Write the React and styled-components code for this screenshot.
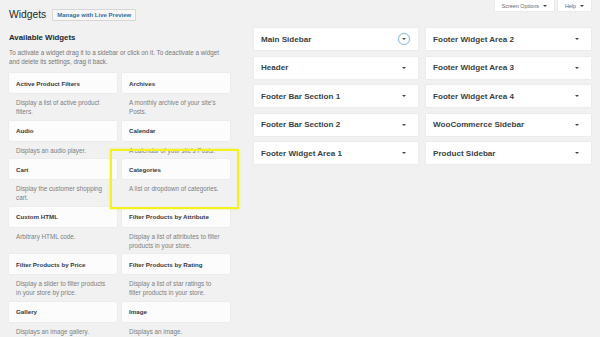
import React from 'react'
import styled, { createGlobalStyle } from 'styled-components';

const GlobalStyle = createGlobalStyle`
    html, body {
        margin: 0;
        padding: 0;
        background: #f1f1f1;
        font-family: "Liberation Sans", Arial, sans-serif;
        color: #23282d;
    }
`;

const widgets = [
    { title: 'Active Product Filters', desc: 'Display a list of active product filters.' },
    { title: 'Archives', desc: "A monthly archive of your site's Posts." },
    { title: 'Audio', desc: 'Displays an audio player.' },
    { title: 'Calendar', desc: "A calendar of your site's Posts." },
    { title: 'Cart', desc: 'Display the customer shopping cart.' },
    { title: 'Categories', desc: 'A list or dropdown of categories.' },
    { title: 'Custom HTML', desc: 'Arbitrary HTML code.' },
    { title: 'Filter Products by Attribute', desc: 'Display a list of attributes to filter products in your store.' },
    { title: 'Filter Products by Price', desc: 'Display a slider to filter products in your store by price.' },
    { title: 'Filter Products by Rating', desc: 'Display a list of star ratings to filter products in your store.' },
    { title: 'Gallery', desc: 'Displays an image gallery.' },
    { title: 'Image', desc: 'Displays an image.' },
];

const sidebars = [
    'Main Sidebar', 'Footer Widget Area 2',
    'Header', 'Footer Widget Area 3',
    'Footer Bar Section 1', 'Footer Widget Area 4',
    'Footer Bar Section 2', 'WooCommerce Sidebar',
    'Footer Widget Area 1', 'Product Sidebar',
];

class App extends React.Component {
    render() {
        return (
            <Page>
                <GlobalStyle />
                <Header>
                    <TitleGroup>
                        <Title>Widgets</Title>
                        <PreviewButton>Manage with Live Preview</PreviewButton>
                    </TitleGroup>
                    <Tabs>
                        <Tab>Screen Options <Caret /></Tab>
                        <Tab>Help <Caret /></Tab>
                    </Tabs>
                </Header>

                <Main>
                    <Available>
                        <SubTitle>Available Widgets</SubTitle>
                        <Intro>
                            To activate a widget drag it to a sidebar or click on it. To deactivate a widget
                            and delete its settings, drag it back.
                        </Intro>
                        <WidgetGrid>
                            {widgets.map((w) => (
                                <Widget key={w.title}>
                                    <WidgetTitle>{w.title}</WidgetTitle>
                                    <WidgetDesc>{w.desc}</WidgetDesc>
                                </Widget>
                            ))}
                            <Highlight />
                        </WidgetGrid>
                    </Available>

                    <SidebarGrid>
                        {sidebars.map((name, i) => (
                            <Sidebar key={name}>
                                <span>{name}</span>
                                <Toggle focused={i === 0}><Caret /></Toggle>
                            </Sidebar>
                        ))}
                    </SidebarGrid>
                </Main>
            </Page>
        );
    }
}

const Page = styled.div`
    width: 600px;
    height: 337px;
    overflow: hidden;
    padding: 0 9px;
    box-sizing: border-box;
`;

const Header = styled.div`
    display: flex;
    justify-content: space-between;
    align-items: flex-start;
    height: 28px;
`;

const TitleGroup = styled.div`
    display: flex;
    align-items: center;
    gap: 6px;
    padding-top: 9px;
`;

const Title = styled.h1`
    margin: 0;
    font-size: 10.3px;
    font-weight: 400;
    line-height: 12px;
    color: #23282d;
`;

const PreviewButton = styled.div`
    height: 12px;
    box-sizing: border-box;
    padding: 0 4px;
    display: flex;
    align-items: center;
    background: #f7f7f7;
    border: 1px solid #d6d6d6;
    border-radius: 1px;
    font-size: 6px;
    font-weight: 700;
    color: #2f6fa3;
`;

const Tabs = styled.div`
    display: flex;
    gap: 4px;
`;

const Tab = styled.div`
    height: 11px;
    box-sizing: border-box;
    padding: 0 7px;
    display: flex;
    align-items: center;
    gap: 4px;
    background: #fff;
    box-shadow: 0 0 1px rgba(0, 0, 0, 0.15);
    font-size: 5.4px;
    color: #666;
`;

const Caret = styled.i`
    display: inline-block;
    width: 0;
    height: 0;
    border-left: 2px solid transparent;
    border-right: 2px solid transparent;
    border-top: 2.5px solid #444;
`;

const Main = styled.div`
    display: flex;
    gap: 24px;
`;

const Available = styled.div`
    width: 221px;
    flex-shrink: 0;
`;

const SubTitle = styled.h2`
    margin: 0;
    padding-top: 5px;
    font-size: 7.8px;
    font-weight: 700;
    line-height: 10px;
`;

const Intro = styled.p`
    margin: 5px 0 0;
    font-size: 6.3px;
    line-height: 9px;
    color: #777;
    height: 18px;
`;

const WidgetGrid = styled.div`
    position: relative;
    margin-top: 7px;
    display: grid;
    grid-template-columns: 108px 108px;
    column-gap: 5px;
`;

const Widget = styled.div`
    display: flex;
    flex-direction: column;
`;

const WidgetTitle = styled.div`
    height: 20px;
    box-sizing: border-box;
    padding: 0 7px;
    display: flex;
    align-items: center;
    background: #fcfcfc;
    box-shadow: 0 0 1px rgba(0, 0, 0, 0.12);
    font-size: 6.2px;
    font-weight: 700;
    color: #33393e;
`;

const WidgetDesc = styled.div`
    padding: 5px 10px 4.5px 7px;
    font-size: 6.3px;
    line-height: 9px;
    color: #7b7f84;
`;

const Highlight = styled.div`
    position: absolute;
    left: 101px;
    top: 76px;
    width: 129px;
    height: 60px;
    box-sizing: border-box;
    border: 2px solid #f4f21c;
    box-shadow: 0 0 2px rgba(240, 235, 40, 0.7);
    pointer-events: none;
`;

const SidebarGrid = styled.div`
    margin-top: 0;
    width: 337px;
    display: grid;
    grid-template-columns: 164px 165px;
    column-gap: 8px;
    row-gap: 6.5px;
    align-content: start;
`;

const Sidebar = styled.div`
    height: 22px;
    box-sizing: border-box;
    padding: 0 8px 0 7px;
    display: flex;
    align-items: center;
    justify-content: space-between;
    background: #fff;
    box-shadow: 0 0 1px rgba(0, 0, 0, 0.13);
    font-size: 8.1px;
    font-weight: 700;
    color: #3a3f44;
`;

const Toggle = styled.span`
    width: 12px;
    height: 12px;
    box-sizing: border-box;
    border-radius: 50%;
    display: flex;
    align-items: center;
    justify-content: center;
    border: 1px solid ${(p) => (p.focused ? '#8cb6e4' : 'transparent')};
    box-shadow: ${(p) => (p.focused ? '0 0 1px #a8c9ee' : 'none')};
`;

export default App;
